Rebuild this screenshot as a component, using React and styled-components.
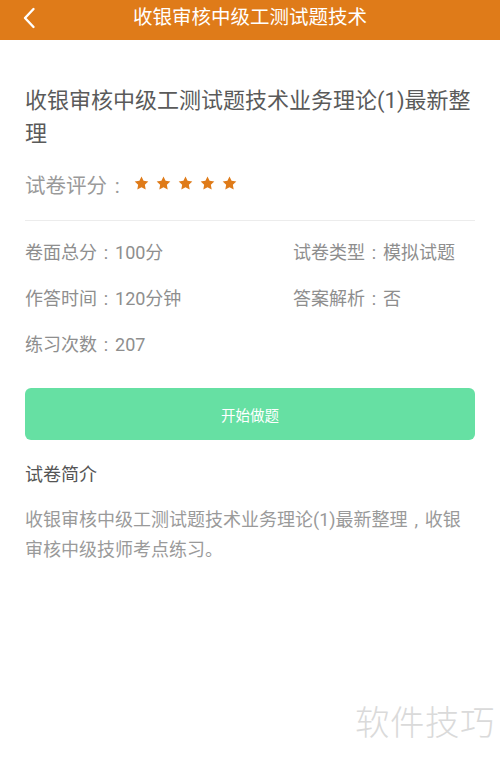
import React from "react";
import styled, { createGlobalStyle } from "styled-components";

const Global = createGlobalStyle`
  html, body { margin: 0; padding: 0; background: #fff; }
  body { font-family: Roboto, "Noto Sans CJK SC", "Noto Sans", sans-serif; }
`;

const Page = styled.div`
  position: relative;
  width: 500px;
  height: 762px;
  overflow: hidden;
  background: #fff;
`;

const Header = styled.header`
  height: 40px;
  background: #df7b19;
  display: flex;
  align-items: center;
  justify-content: center;
  position: relative;
`;

const BackButton = styled.button`
  position: absolute;
  left: 18px;
  top: 5px;
  width: 22px;
  height: 26px;
  padding: 0;
  border: none;
  background: none;
  display: flex;
  align-items: center;
  justify-content: center;
`;

const HeaderTitle = styled.h1`
  margin: 0;
  font-size: 19.5px;
  font-weight: 400;
  color: #fff;
  line-height: 40px;
  transform: translateY(-2px);
`;

const Main = styled.main`
  padding: 0 25px;
  display: flex;
  flex-direction: column;
`;

const Title = styled.h2`
  margin: 44px 0 0;
  font-size: 22px;
  font-weight: 400;
  line-height: 33px;
  color: #5a5a5a;
`;

const RatingRow = styled.div`
  margin-top: 21px;
  display: flex;
  align-items: center;
  height: 30px;
  padding-bottom: 19px;
  border-bottom: 1px solid #ececec;
`;

const RatingLabel = styled.span`
  font-size: 20.5px;
  color: #9a9a9a;
  line-height: 30px;
`;

/* centred full-width style punctuation, as drawn by Android */
const Punct = styled.span`
  margin: 0 0.38em 0 0.38em;
`;

const Stars = styled.div`
  display: flex;
  gap: 7px;
  margin-left: 6px;
  transform: translateY(-3px);
`;

const InfoGrid = styled.div`
  margin-top: 9px;
  display: grid;
  grid-template-columns: 268px 1fr;
  grid-auto-rows: 46px;
`;

const InfoItem = styled.div`
  font-size: 18px;
  line-height: 46px;
  color: #8e8e8e;
`;

const StartButton = styled.button`
  margin-top: 20px;
  height: 52px;
  border: none;
  border-radius: 6px;
  background: #66e0a3;
  color: #fff;
  font-family: inherit;
  font-size: 14.5px;
  padding: 0;
`;

const SectionTitle = styled.h3`
  margin: 20px 0 0;
  font-size: 18px;
  font-weight: 400;
  line-height: 30px;
  color: #555;
`;

const Description = styled.p`
  margin: 15px 0 0;
  font-size: 18px;
  line-height: 29.5px;
  color: #9a9a9a;
`;

const Watermark = styled.div`
  position: absolute;
  right: 5px;
  top: 701px;
  font-size: 34.5px;
  font-weight: 300;
  line-height: 44px;
  color: #dadada;
  letter-spacing: 0.5px;
`;

const Star = () => (
  <svg width="15" height="14" viewBox="0 0 24 23">
    <path
      d="M12 0.8l3.4 7.1 7.8 1-5.7 5.4 1.4 7.7L12 18.3l-6.9 3.7 1.4-7.7L0.8 8.9l7.8-1z"
      fill="#df7b19"
    />
  </svg>
);

const Field = ({ label, value }) => (
  <InfoItem>
    {label}
    <Punct>:</Punct>
    {value}
  </InfoItem>
);

export default function App() {
  const title = "收银审核中级工测试题技术业务理论(1)最新整理";
  return (
    <Page>
      <Global />
      <Header>
        <BackButton aria-label="返回">
          <svg width="14" height="22" viewBox="0 0 14 22">
            <path
              d="M11.5 2L3 11l8.5 9"
              fill="none"
              stroke="#fff"
              strokeWidth="2.4"
              strokeLinecap="round"
              strokeLinejoin="round"
            />
          </svg>
        </BackButton>
        <HeaderTitle>收银审核中级工测试题技术</HeaderTitle>
      </Header>
      <Main>
        <Title>{title}</Title>
        <RatingRow>
          <RatingLabel>
            试卷评分<Punct>:</Punct>
          </RatingLabel>
          <Stars>
            {[0, 1, 2, 3, 4].map((i) => (
              <Star key={i} />
            ))}
          </Stars>
        </RatingRow>
        <InfoGrid>
          <Field label="卷面总分" value="100分" />
          <Field label="试卷类型" value="模拟试题" />
          <Field label="作答时间" value="120分钟" />
          <Field label="答案解析" value="否" />
          <Field label="练习次数" value="207" />
        </InfoGrid>
        <StartButton>开始做题</StartButton>
        <SectionTitle>试卷简介</SectionTitle>
        <Description>
          收银审核中级工测试题技术业务理论(1)最新整理<Punct>,</Punct>收银审核中级技师考点练习。
        </Description>
      </Main>
      <Watermark>软件技巧</Watermark>
    </Page>
  );
}
